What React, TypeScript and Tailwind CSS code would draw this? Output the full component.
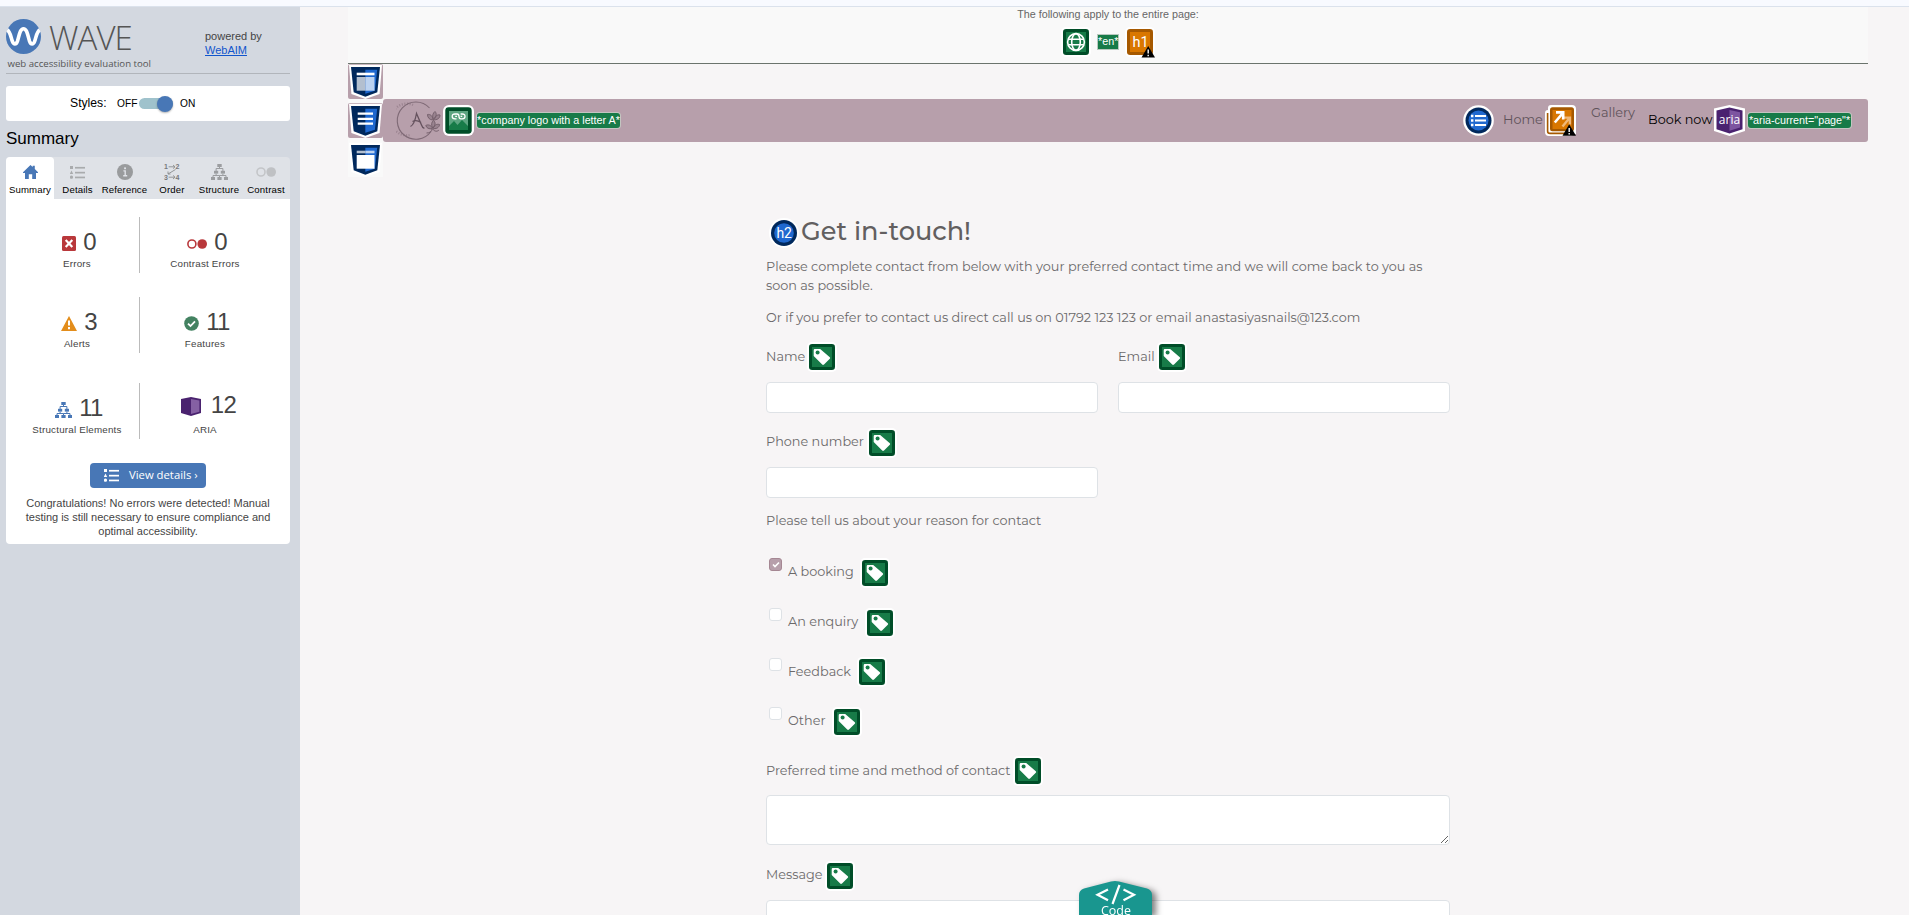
import React from "react";

const sans = "font-['Liberation_Sans',sans-serif]";
const body = "font-['Montserrat','Inter',sans-serif]";
const open = "font-['Open_Sans',sans-serif]";

function TagIcon() {
  return (
    <svg width="30" height="30" viewBox="0 0 30 30" className="shrink-0">
      <rect width="30" height="30" rx="5" fill="#fff" />
      <rect x="2" y="2" width="26" height="26" rx="3.2" fill="#004d28" />
      <rect x="5" y="5" width="20" height="20" fill="#177b48" />
      <path
        d="M7.8 7H13.2L22.8 15.2Q23.6 16 22.8 16.8L17 22.6Q16 23.4 15.2 22.6L6.7 14V8.2Q6.7 7 7.8 7Z"
        fill="#fff"
      />
      <circle cx="10.6" cy="10.6" r="2" fill="#177b48" />
    </svg>
  );
}

function WarnMark({ x, y }: { x: number; y: number }) {
  return (
    <g transform={`translate(${x} ${y})`}>
      <path d="M6.7 0L13.5 11.5H0Z" fill="#000" />
      <path d="M6.7 3.6V7.6M6.7 8.8V10.3" stroke="#fff" strokeWidth="1.4" />
    </g>
  );
}

function Shield({ children }: { children: React.ReactNode }) {
  return (
    <svg width="35" height="35" viewBox="0 0 35 35" className="block">
      <path d="M1 .8H34L31.6 30L17.4 34.9L3.4 30Z" fill="#fff" />
      <path d="M3 3H32L29.3 28.3L17.3 32.7L5.7 28.3Z" fill="#00285c" />
      <path d="M17.3 5.7H29.2L26.9 26.7L17.3 29.7Z" fill="#1f68cf" />
      {children}
    </svg>
  );
}

function HeaderShield() {
  return (
    <Shield>
      <rect x="8.7" y="8.7" width="17.8" height="2.6" fill="#fff" />
      <rect x="8.7" y="13" width="8.6" height="13.7" fill="#b3bfcf" />
      <rect x="17.3" y="13" width="9.2" height="13.7" fill="#bcd2f0" />
    </Shield>
  );
}

function NavShield() {
  return (
    <Shield>
      <path d="M9.7 10.7H25M9.7 15.8H25M9.7 20.7H25" stroke="#fff" strokeWidth="2.2" />
    </Shield>
  );
}

function MainShield() {
  return (
    <Shield>
      <rect x="8.7" y="8.7" width="8.6" height="2.6" fill="#b3bfcf" />
      <rect x="17.3" y="8.7" width="9.2" height="2.6" fill="#bcd2f0" />
      <rect x="8.7" y="13" width="17.8" height="13.7" fill="#fff" />
    </Shield>
  );
}

function ListGlyph({ color }: { color: string }) {
  return (
    <svg width="15" height="13" viewBox="0 0 15 13" fill={color} className="shrink-0">
      <rect x="0" y="0" width="3" height="3" />
      <path d="M1.5 4.6L3.2 8H-.2Z" />
      <circle cx="1.5" cy="11.2" r="1.6" />
      <rect x="5" y=".9" width="10" height="1.7" />
      <rect x="5" y="5.8" width="10" height="1.7" />
      <rect x="5" y="10.6" width="10" height="1.7" />
    </svg>
  );
}

function TreeGlyph({ color }: { color: string }) {
  return (
    <svg width="17" height="16" viewBox="0 0 17 16">
      <g fill={color}>
        <rect x="6.3" y="0" width="4.4" height="3" />
        <rect x="3" y="6.8" width="4.2" height="2.8" />
        <rect x="9.8" y="6.8" width="4.2" height="2.8" />
        <rect x="0" y="13" width="4" height="3" />
        <rect x="6.4" y="13" width="4.2" height="3" />
        <rect x="13" y="13" width="4" height="3" />
      </g>
      <path
        d="M8.5 3V4.5M5.1 7V4.5H11.9V7M5.1 9.6V11.5M2 13V11.5H8.5V13M11.9 9.6V11.5M8.5 11.5H15V13"
        stroke={color}
        strokeWidth="1"
        fill="none"
      />
    </svg>
  );
}

function WaveLogo() {
  return (
    <svg width="35" height="35" viewBox="0 0 35 35">
      <circle cx="17.5" cy="17.5" r="17.5" fill="#4877b6" />
      <path
        d="M1.2 11C4.4 12.5 5 19 6.4 22.3C7.8 25.8 10 26 11.4 22.3C13.2 17 13.8 9.8 17.5 9.8C21.2 9.8 21.8 17 23.6 22.3C25 26 27.2 25.8 28.6 22.3C30 19 30.6 12.5 33.8 11"
        stroke="#fff"
        strokeWidth="3.6"
        fill="none"
      />
    </svg>
  );
}

const tabs = [
  {
    name: "Summary",
    w: "w-[48px]",
    icon: (
      <svg width="15" height="14" viewBox="0 0 15 14" fill="#4877b6">
        <path d="M7.5 0L9.7 2V.8H11.8V4L15 7.2V8H13V14H9.2V9.2H5.8V14H2V8H0V7.2Z" />
      </svg>
    ),
  },
  { name: "Details", w: "w-[47px]", icon: <ListGlyph color="#a9abad" /> },
  {
    name: "Reference",
    w: "w-[47px]",
    icon: (
      <svg width="16" height="16" viewBox="0 0 16 16">
        <circle cx="8" cy="8" r="8" fill="#999b9d" />
        <path d="M6.4 6.9H8.2V11.5M6.2 11.8H10.2" stroke="#dfe2e7" strokeWidth="1.4" fill="none" />
        <rect x="7.1" y="3.4" width="1.9" height="1.8" fill="#dfe2e7" />
      </svg>
    ),
  },
  {
    name: "Order",
    w: "w-[48px]",
    icon: (
      <svg width="16" height="16" viewBox="0 0 16 16" fill="none" stroke="#8b8d8f" strokeWidth=".9">
        <g fill="#77797b" stroke="none" fontSize="7" fontWeight="700" fontFamily="Liberation Sans">
          <text x="0" y="5.4">1</text>
          <text x="11.6" y="5.4">2</text>
          <text x="0" y="15.6">3</text>
          <text x="11.6" y="15.6">4</text>
        </g>
        <path d="M4.6 2.8H11M9 1L11 2.8L9 4.6M4.6 13.2H11M9 11.4L11 13.2L9 15M11.5 5.5L4 10M4 7.5V10H6.5" />
      </svg>
    ),
  },
  { name: "Structure", w: "w-[46px]", icon: <TreeGlyph color="#9b9da0" /> },
  {
    name: "Contrast",
    w: "w-[48px]",
    icon: (
      <svg width="20" height="10" viewBox="0 0 20 10">
        <circle cx="5" cy="5" r="4" fill="none" stroke="#c3c5c8" strokeWidth="1.6" />
        <circle cx="15.2" cy="5" r="4.8" fill="#bfc1c4" />
      </svg>
    ),
  },
];

function Stat({
  icon,
  value,
  label,
  gap = "gap-[7px]",
  row = "pl-[4px]",
}: {
  icon: React.ReactNode;
  value: string;
  label: string;
  gap?: string;
  row?: string;
}) {
  return (
    <div className="flex w-[126px] flex-col items-center pt-[13px]">
      <div className={`flex h-[24px] items-center ${gap} ${row}`}>
        <span className="pt-[3px]">{icon}</span>
        <span className="text-[24px] leading-[24px] tracking-[-0.6px] text-[#444]">{value}</span>
      </div>
      <div className="mt-[3px] text-[9.8px] leading-[14px] tracking-[0.2px] whitespace-nowrap text-[#444]">
        {label}
      </div>
    </div>
  );
}

function StatRow({ children, className }: { children: React.ReactNode[]; className: string }) {
  return (
    <div className={`flex h-[56px] ${className}`}>
      <div className="w-[134px] border-r border-[#bbb] pl-[8px]">{children[0]}</div>
      <div className="pl-[2px]">{children[1]}</div>
    </div>
  );
}

function Sidebar() {
  return (
    <aside className={`h-[908px] w-[300px] shrink-0 bg-[#d3d8e0] pr-[10px] pl-[6px] ${sans}`}>
      <header className="flex h-[67px] border-b border-[#b1b5bb] pt-[12px]">
        <div className="w-[190px]">
          <div className="flex h-[35px]">
            <WaveLogo />
            <span
              className={`${open} ml-[8px] text-[33px] leading-[38px] font-light tracking-[-0.9px] text-[#555]`}
            >
              WAVE
            </span>
          </div>
          <div className={`${open} mt-[2px] pl-[1.5px] text-[9.65px] leading-[15px] whitespace-nowrap text-[#555]`}>
            web accessibility evaluation tool
          </div>
        </div>
        <div className="pt-[10px] pl-[9px] text-[11px] leading-[14px] whitespace-nowrap text-[#444]">
          powered by
          <br />
          <a className="text-[#1155cc] underline">WebAIM</a>
        </div>
      </header>

      <div className="mt-[12px] flex h-[35px] items-center rounded-[3px] bg-white pl-[64px] text-black">
        <span className="w-[47px] text-[12.2px]">Styles:</span>
        <span className="w-[22px] text-[10.2px]">OFF</span>
        <span className="flex h-[11px] w-[34px] items-center justify-end rounded-full bg-[#9fc2cc]">
          <span className="size-[16px] rounded-full bg-[#4877b6] shadow-[0_1px_2px_rgba(0,0,0,0.3)]" />
        </span>
        <span className="ml-[7px] text-[10.2px]">ON</span>
      </div>

      <h2 className="mt-[5px] h-[31px] pt-px text-[17px] leading-[24px] text-black">Summary</h2>

      <nav className="flex h-[42px] rounded-t-[4px] bg-[#dfe2e7]">
        {tabs.map((t, i) => (
          <div
            key={t.name}
            className={`flex ${t.w} flex-col items-center ${i === 0 ? "rounded-t-[4px] bg-white" : ""}`}
          >
            <span className="flex h-[26px] items-center justify-center pt-[4px]">{t.icon}</span>
            <span className="text-[9.6px] leading-[14px] tracking-[0.15px] whitespace-nowrap text-black">{t.name}</span>
          </div>
        ))}
      </nav>

      <section className="h-[345px] rounded-b-[4px] bg-white pt-[18px]">
        <StatRow className="mb-[24px]">
          <Stat
            label="Errors"
            value="0"
            icon={
              <svg width="14" height="15" viewBox="0 0 14 15">
                <rect width="14" height="15" rx="1.5" fill="#b9383b" />
                <path d="M3.7 4L10.3 11M10.3 4L3.7 11" stroke="#fff" strokeWidth="2.2" />
              </svg>
            }
          />
          <Stat
            label="Contrast Errors"
            value="0"
            icon={
              <svg width="20" height="10" viewBox="0 0 20 10">
                <circle cx="4.9" cy="5" r="4" fill="none" stroke="#b9383b" strokeWidth="1.6" />
                <circle cx="15.2" cy="5" r="4.8" fill="#b9383b" />
              </svg>
            }
          />
        </StatRow>
        <StatRow className="mb-[30px]">
          <Stat
            label="Alerts"
            value="3"
            icon={
              <svg width="16" height="15" viewBox="0 0 16 15">
                <path d="M8 0L16 15H0Z" fill="#e38d1b" />
                <path d="M8 4.6V9.6M8 11V13.2" stroke="#fff" strokeWidth="2" />
              </svg>
            }
          />
          <Stat
            label="Features"
            value="11"
            icon={
              <svg width="15" height="15" viewBox="0 0 15 15">
                <circle cx="7.5" cy="7.5" r="7.3" fill="#438261" />
                <path d="M4 7.6L6.5 10L11 5.3" stroke="#fff" strokeWidth="1.8" fill="none" />
              </svg>
            }
          />
        </StatRow>
        <StatRow className="mb-[24px]">
          <Stat label="Structural Elements" value="11" icon={<TreeGlyph color="#4877b6" />} />
          <Stat
            label="ARIA"
            value="12"
            gap="gap-[10px]"
            row="pl-[7px] -mt-[3px] mb-[3px]"
            icon={
              <svg width="20" height="19" viewBox="0 0 20 19">
                <path d="M0 2L10 0L20 2V16L10 19L0 16Z" fill="#4a226f" />
                <path d="M10 2L18.4 3.4V14.8L10 17Z" fill="#8560a3" />
              </svg>
            }
          />
        </StatRow>
        <div className="ml-[84px] flex h-[25px] w-[116px] items-center rounded-[4px] bg-[#4877b6] pl-[14px]">
          <ListGlyph color="#fff" />
          <span className={`${open} ml-[10px] pb-px text-[11.3px] leading-[24px] whitespace-nowrap text-white`}>
            View details ›
          </span>
        </div>
        <p className="mt-[8px] text-center text-[11px] leading-[14px] whitespace-nowrap text-[#444]">
          Congratulations! No errors were detected! Manual
          <br />
          testing is still necessary to ensure compliance and
          <br />
          optimal accessibility.
        </p>
      </section>
    </aside>
  );
}

function PageBanner() {
  return (
    <div className={`flex h-[57px] flex-col items-center border-b border-[#6b746d] bg-[#f9f9f9] ${sans}`}>
      <p className="text-[10.75px] leading-[15px] text-[#666]">The following apply to the entire page:</p>
      <div className="mt-[4px] flex h-[32px] items-center pl-px">
        <svg width="30" height="30" viewBox="0 0 30 30">
          <rect width="30" height="30" rx="5" fill="#fff" />
          <rect x="2" y="2" width="26" height="26" rx="3.2" fill="#004d28" />
          <rect x="5" y="5" width="20" height="20" fill="#177b48" />
          <g fill="none" stroke="#fff" strokeWidth="1.6">
            <circle cx="15" cy="15" r="8.4" />
            <ellipse cx="15" cy="15" rx="4.3" ry="8.4" />
            <path d="M7.4 12.2H22.6M7.4 17.8H22.6" />
          </g>
        </svg>
        <span className="mx-[6px] h-[16px] w-[22px] border border-[#b9c9bf] bg-[#177b48] text-center text-[10.75px] leading-[13px] text-white">
          *en*
        </span>
        <svg width="31" height="31" viewBox="0 0 31 31">
          <rect width="30" height="30" rx="5" fill="#fff" />
          <rect x="2" y="2" width="26" height="26" rx="3.2" fill="#a65900" />
          <rect x="5" y="5" width="20" height="20" fill="#d97700" />
          <text x="7.4" y="20.4" fontSize="14.5" fill="#fff" fontFamily="Roboto">
            h1
          </text>
          <WarnMark x={16.5} y={19} />
        </svg>
      </div>
    </div>
  );
}

function SiteLogo() {
  return (
    <svg width="47" height="40" viewBox="0 0 47 40" fill="none" stroke="#7f6a76" strokeWidth="1">
      <path d="M33.5 7A18.6 18.6 0 1 0 35 30.5" strokeWidth="1.1" />
      <path d="M17 4A15.8 15.8 0 1 0 14 34" strokeWidth="2.4" strokeDasharray="1 1.6" opacity=".5" />
      <path
        d="M14.5 25.5C17.5 24 19.5 18 20.5 12.5L25.5 24Q26.4 26.8 28.4 27.4M16.5 20.5C19 19 22 19.4 25 21.6"
        stroke="#65525e"
        strokeWidth="1.3"
      />
      <g stroke="#75606c" strokeWidth="1" fill="#9a8490">
        <path d="M37 19C33.5 19 31.5 16.5 31.5 13.5C34.5 13 36.5 15 37.2 18.5C36 14.5 37 12 39 10.5C41 12.5 40.5 16 37.8 18.5C39 15 41.5 13.3 44 14C44 17.5 41 19 37 19Z" />
        <path d="M36.5 27.5C33 28.5 30.5 27 29.8 24.5C32.5 23 35 24.5 36.5 27C35 23.5 35.5 21 37.5 19.5C39.8 21.2 39.5 24.5 37 27C38.5 24 41 22.6 43.6 23.6C43 27 40 28.2 36.5 27.5Z" />
        <path d="M36 28C36 30.5 33.5 32 30.5 32M36.5 28C39 31 41.5 30.5 43 29" fill="none" />
      </g>
    </svg>
  );
}

function Navbar() {
  return (
    <nav
      className={`flex h-[43px] items-center rounded-[3px] bg-[#b79fab] pr-[17px] pl-[13px] text-[12.8px] whitespace-nowrap text-[#5f535a] ${body}`}
    >
      <SiteLogo />
      <svg width="31" height="31" viewBox="0 0 31 31">
        <rect width="31" height="31" rx="6" fill="#fff" />
        <rect x="2.3" y="2.3" width="26.4" height="26.4" rx="3.4" fill="#004d28" />
        <rect x="6" y="6" width="19" height="19" fill="#5da581" />
        <path d="M6 21L11 16L14.5 20L19 15L25 21V25H6Z" fill="#177b48" />
        <path
          d="M13.5 13.8H12Q9.2 13.8 9.2 11.4T12 9H14Q16 9 16 11.4T18 13.8H19.2Q22 13.8 22 11.4T19.2 9H17.6M12.2 11.4H14M17.6 11.4H19.2"
          stroke="#fff"
          strokeWidth="1.3"
          fill="none"
        />
      </svg>
      <span
        className={`${sans} ml-[3px] h-[15px] w-[143px] rounded-[3px] bg-[#177b48] text-center text-[10.75px] leading-[15px] text-white ring-1 ring-[#c8d6ca]/70`}
      >
        *company logo with a letter A*
      </span>

      <svg width="31" height="31" viewBox="0 0 31 31" className="ml-auto">
        <circle cx="15.5" cy="15.5" r="15.3" fill="#fff" />
        <circle cx="15.5" cy="15.5" r="13" fill="#00285c" />
        <circle cx="15.5" cy="15.5" r="10" fill="#1f68cf" />
        <path d="M12 11H23M12 15.5H23M12 20H23" stroke="#fff" strokeWidth="2" />
        <path d="M8 11H10.4M8 15.5H10.4M8 20H10.4" stroke="#fff" strokeWidth="2.4" />
      </svg>
      <span className="mb-px ml-[9px] w-[42px]">Home</span>
      <svg width="31" height="31" viewBox="0 0 31 31">
        <path d="M6 0H27Q31 0 31 4V29H28Q28 31 26 31H4Q0 31 0 27V8Q0 5 3 5V3Q3 0 6 0Z" fill="#fff" />
        <path d="M2.6 8V26Q2.6 28.4 5 28.4H24" stroke="#a65900" strokeWidth="1.6" fill="none" />
        <rect x="5" y="2.3" width="24" height="24" rx="2.5" fill="#a65900" />
        <rect x="7.5" y="5" width="19" height="19" fill="#d97700" />
        <path d="M17.5 21.5L24.5 13M18.5 12.6H24.9V19.5" stroke="#efb878" strokeWidth="2.4" fill="none" />
        <path d="M9.8 17.5L18 7.8M11 7.4H18.2V14.6" stroke="#fff" strokeWidth="2.6" fill="none" />
        <WarnMark x={17.5} y={19.3} />
      </svg>
      <span className="mb-[15px] ml-[15px] w-[57px]">Gallery</span>
      <span className="mb-px w-[66px] text-black">Book now</span>
      <svg width="31" height="31" viewBox="0 0 31 31">
        <path d="M0 3.5L15.5 0L31 3.5V26L15.5 31L0 26Z" fill="#fff" />
        <path d="M2.5 5.5L15.5 2.5L28.5 5.5V24.2L15.5 28.4L2.5 24.2Z" fill="#4a226f" />
        <path d="M15.5 5L26 7.3V22.4L15.5 25.7Z" fill="#7d55a0" />
        <text x="15.5" y="18.6" textAnchor="middle" fontSize="12" fill="#fff" fontFamily="Open Sans" fontWeight="500">
          aria
        </text>
      </svg>
      <span
        className={`${sans} ml-[3px] h-[15px] w-[103px] rounded-[3px] bg-[#177b48] text-center text-[10.75px] leading-[15px] text-white ring-1 ring-[#c8d6ca]/70`}
      >
        *aria-current="page"*
      </span>
    </nav>
  );
}

function FieldLabel({ text, w, lift = "pb-px" }: { text: string; w: string; lift?: string }) {
  return (
    <label className="flex h-[30px] items-center">
      <span className={`${w} ${lift} whitespace-nowrap`}>{text}</span>
      <TagIcon />
    </label>
  );
}

function Check({ text, w, checked }: { text: string; w: string; checked?: boolean }) {
  return (
    <div className="flex h-[49.6px] pl-[3px]">
      <span
        className={`mt-[0.4px] flex size-[13px] items-center justify-center rounded-[3px] border ${
          checked ? "border-[#a58793] bg-[#b79fab]" : "border-[#dee2e6] bg-white"
        }`}
      >
        {checked && (
          <svg width="8" height="7" viewBox="0 0 8 7">
            <path d="M1 3.5L3 5.5L7 1.5" stroke="#fff" strokeWidth="1.6" fill="none" />
          </svg>
        )}
      </span>
      <label className="flex h-[30px] items-center pl-[6px]">
        <span className={`${w} pb-[2px] whitespace-nowrap`}>{text}</span>
        <TagIcon />
      </label>
    </div>
  );
}

const input = "block w-[332px] h-[31px] rounded-[4px] border border-[#dee2e6] bg-white";

function ContactForm() {
  return (
    <form className={`ml-[418px] w-[684px] text-[12.8px] leading-[19.2px] text-[#6b696a] ${body}`}>
      <h2 className="flex h-[30px] items-center pl-[3px]">
        <svg width="30" height="30" viewBox="0 0 30 30">
          <circle cx="15" cy="15" r="15" fill="#fff" />
          <circle cx="15" cy="15" r="13" fill="#00285c" />
          <circle cx="15" cy="15" r="9.8" fill="#1f68cf" />
          <text x="15.2" y="20.2" textAnchor="middle" fontSize="14" fill="#fff" fontFamily="Roboto">
            h2
          </text>
        </svg>
        <span className="mb-[4px] ml-[2px] text-[25.6px] leading-[30px] font-medium whitespace-nowrap text-[#625f60]">
          Get in-touch!
        </span>
      </h2>
      <p className="mt-[9px] whitespace-nowrap">
        Please complete contact from below with your preferred contact time and we will come back to you as
        <br />
        soon as possible.
      </p>
      <p className="mt-[13px] whitespace-nowrap">
        Or if you prefer to contact us direct call us on 01792 123 123 or email anastasiyasnails@123.com
      </p>
      <div className="mt-[14.6px] flex gap-[20px]">
        <div>
          <FieldLabel text="Name" w="w-[41.4px]" />
          <input className={`${input} mt-[9.8px]`} />
        </div>
        <div>
          <FieldLabel text="Email" w="w-[38.6px]" />
          <input className={`${input} mt-[9.8px]`} />
        </div>
      </div>
      <div className="mt-[15px]">
        <FieldLabel text="Phone number" w="w-[101px]" lift="pb-[3px]" />
        <input className={`${input} mt-[9px]`} />
      </div>
      <p className="mt-[13px] mb-[27.8px]">Please tell us about your reason for contact</p>
      <Check text="A booking" w="w-[71.7px]" checked />
      <Check text="An enquiry" w="w-[76.6px]" />
      <Check text="Feedback" w="w-[69px]" />
      <Check text="Other" w="w-[43.7px]" />
      <FieldLabel text="Preferred time and method of contact" w="w-[247px]" lift="pb-[2px]" />
      <textarea className="mt-[8.6px] block h-[50px] w-[684px] rounded-[4px] border border-[#dee2e6] bg-white" />
      <div className="mt-[15.7px]">
        <FieldLabel text="Message" w="w-[59px]" lift="pb-[2px]" />
      </div>
      <textarea className="mt-[9.3px] block h-[50px] w-[684px] rounded-[4px] border border-[#dee2e6] bg-white" />
    </form>
  );
}

function CodeBadge() {
  return (
    <svg
      className="absolute top-[880px] left-[1078px] drop-shadow-[4px_2px_3px_rgba(0,0,0,0.5)]"
      width="76"
      height="35"
      viewBox="0 0 76 35"
    >
      <path d="M1 40V15Q1 10 6 8.5L33 1.5Q37 .5 41 1.5L69 8.5Q74 10 74 15V40Z" fill="#19968f" />
      <path d="M30 9.5L19.5 14.8L30 20.3M45.5 9.5L56 14.8L45.5 20.3M41.5 5L34.5 24" stroke="#fff" strokeWidth="2.2" fill="none" />
      <text x="38" y="34.5" textAnchor="middle" fontSize="12.5" fill="#fff" fontFamily="Open Sans">
        Code
      </text>
    </svg>
  );
}

export default function App() {
  return (
    <div className="relative h-[915px] w-[1909px] overflow-hidden bg-[#f7f5f6]">
      <div className="h-[7px] border-b border-[#dbe2ec] bg-[#f8faff]" />
      <div className="flex h-[908px]">
        <Sidebar />
        <main className="flex-1 overflow-hidden pr-[41px] pl-[48px]">
          <PageBanner />
          <div className="flex">
            <div className="flex h-[113px] w-[35px] flex-col justify-between bg-[#f9f9f9]">
              <div className="rounded-[2px] bg-[#b79fab]">
                <HeaderShield />
              </div>
              <div className="rounded-[2px] bg-[#b79fab]">
                <NavShield />
              </div>
              <MainShield />
            </div>
            <div className="flex-1 pt-[35px]">
              <Navbar />
            </div>
          </div>
          <div className="h-[41px]" />
          <ContactForm />
        </main>
      </div>
      <CodeBadge />
    </div>
  );
}
